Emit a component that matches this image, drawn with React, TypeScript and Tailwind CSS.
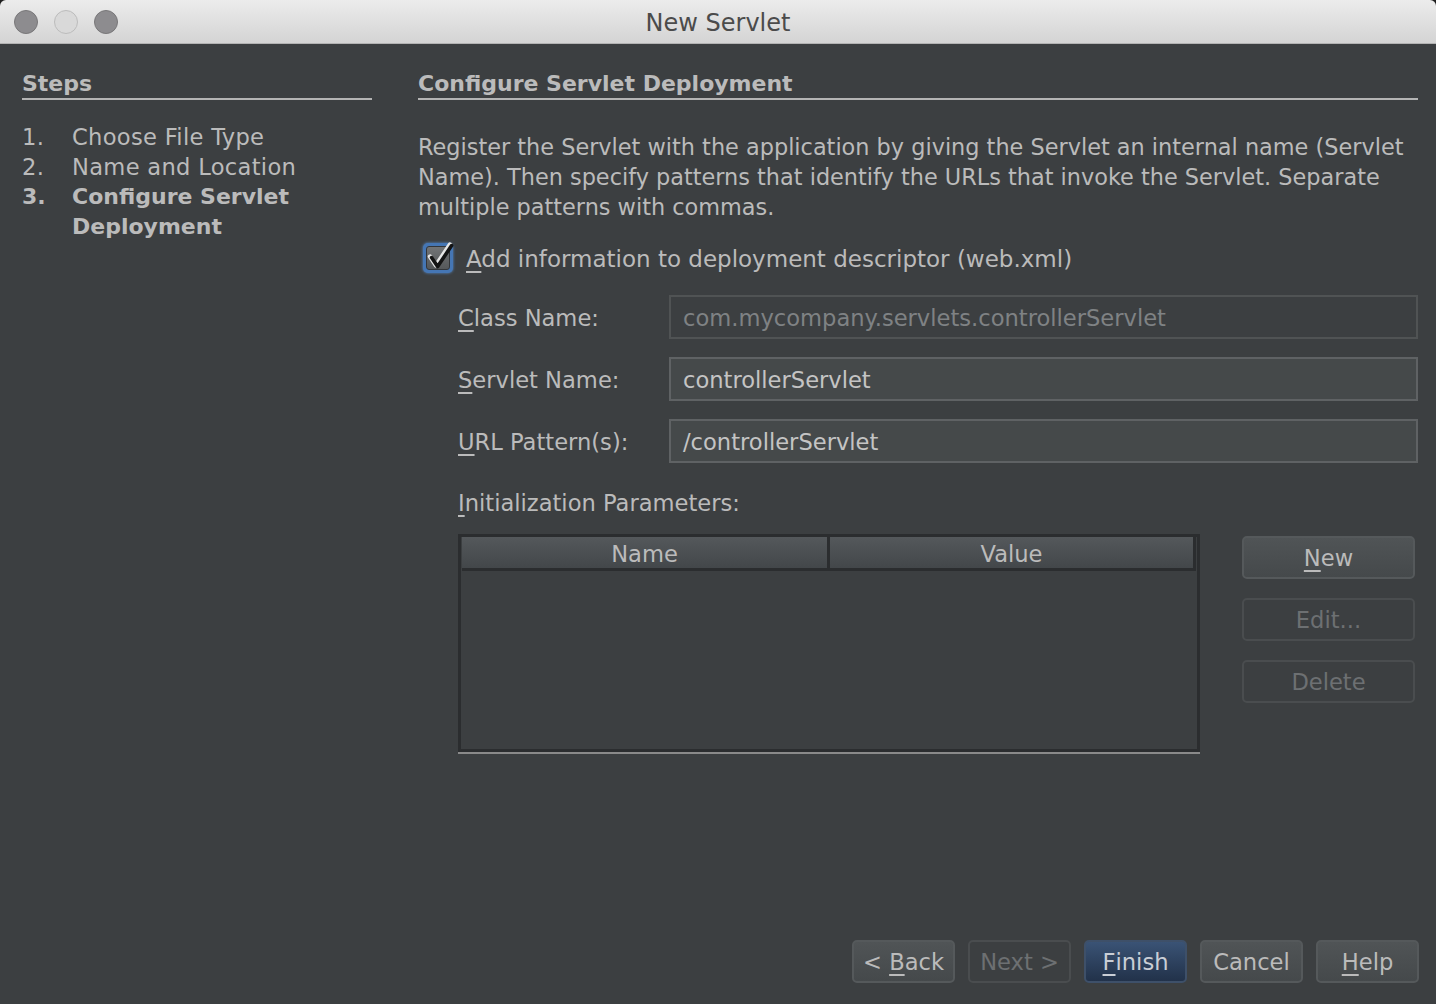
import React from "react";

const U = ({ children }: { children: React.ReactNode }) => (
  <span className="underline underline-offset-[4px] decoration-[1.5px]">{children}</span>
);

function Btn({
  children,
  disabled,
  primary,
  className = "",
}: {
  children: React.ReactNode;
  disabled?: boolean;
  primary?: boolean;
  className?: string;
}) {
  let cls =
    "flex items-center justify-center h-[43px] pt-[1px] rounded-[5px] border-2 text-[22.6px] leading-none ";
  if (primary) {
    cls += "border-[#3e5069] bg-gradient-to-b from-[#3a5375] to-[#22324a] text-[#c9ced6] ";
  } else if (disabled) {
    cls += "border-[#4a4d4f] bg-[#3c3f41] text-[#6d7072] ";
  } else {
    cls += "border-[#55595b] bg-gradient-to-b from-[#505456] to-[#45494b] text-[#bbbbbb] ";
  }
  return <div className={cls + className}>{children}</div>;
}

function Field({
  label,
  value,
  disabled,
}: {
  label: React.ReactNode;
  value: string;
  disabled?: boolean;
}) {
  return (
    <div className="flex items-center h-[44px]">
      <div className="w-[211px] text-[#bbbbbb] pt-[1px]">{label}</div>
      <div
        className={
          "flex-1 h-[44px] flex items-center px-[12px] pt-[1px] border-2 " +
          (disabled
            ? "border-[#505354] bg-[#3c3f41] text-[#7f8284]"
            : "border-[#5f6264] bg-[#45494a] text-[#c4c4c4]")
        }
      >
        {value}
      </div>
    </div>
  );
}

export default function App() {
  return (
    <div
      className="w-[1436px] h-[1004px] bg-[#1e1e1e] overflow-hidden text-[22.6px] leading-[30px]"
      style={{ fontFamily: '"DejaVu Sans", "Noto Sans", sans-serif' }}
    >
      {/* Title bar */}
      <div className="relative h-[44px] rounded-t-[6px] bg-gradient-to-b from-[#ececec] to-[#d4d4d4] border-b border-[#b3b3b3] flex items-center justify-center">
        <div className="absolute left-[14px] top-[10px] flex gap-[16px]">
          <div className="w-[24px] h-[24px] rounded-full bg-[#8d8c8f] border border-[#787779]" />
          <div className="w-[24px] h-[24px] rounded-full bg-[#d9d9d9] border border-[#bcbcbc]" />
          <div className="w-[24px] h-[24px] rounded-full bg-[#8d8c8f] border border-[#787779]" />
        </div>
        <div className="text-[24px] text-[#4b4b4b] pt-[2px]">New Servlet</div>
      </div>

      {/* Body */}
      <div className="h-[960px] bg-[#3c3f41] flex flex-col text-[#bbbbbb]">
        <div className="flex pt-[25px]">
          {/* Left steps */}
          <div className="ml-[22px] w-[350px]">
            <div className="font-bold text-[22px] border-b-2 border-[#b4b4b4] h-[31px]">Steps</div>
            <div className="mt-[22px]">
              <div className="flex tracking-[0.3px]">
                <span className="w-[50px]">1.</span>
                <span>Choose File Type</span>
              </div>
              <div className="flex tracking-[0.3px]">
                <span className="w-[50px]">2.</span>
                <span>Name and Location</span>
              </div>
              <div className="flex font-bold text-[22px]">
                <span className="w-[50px]">3.</span>
                <span>
                  Configure Servlet
                  <br />
                  Deployment
                </span>
              </div>
            </div>
          </div>

          {/* Right content */}
          <div className="ml-[46px] w-[1000px]">
            <div className="font-bold text-[22px] border-b-2 border-[#b4b4b4] h-[31px]">
              Configure Servlet Deployment
            </div>
            <div className="mt-[32px] whitespace-nowrap text-[22.4px]">
              Register the Servlet with the application by giving the Servlet an internal name (Servlet
              <br />
              Name). Then specify patterns that identify the URLs that invoke the Servlet. Separate
              <br />
              multiple patterns with commas.
            </div>

            <div className="mt-[21px] flex items-center h-[30px]">
              <div className="relative ml-[5px] w-[30px] h-[30px] rounded-[5px] bg-[#4576b4] p-[3px] shadow-[0_0_3px_#5a8fd0]">
                <div className="w-full h-full rounded-[3px] bg-gradient-to-b from-[#727476] to-[#55585a] border border-[#33363a]" />
                <svg
                  viewBox="0 0 30 30"
                  className="absolute left-0 top-0 w-[30px] h-[30px] overflow-visible"
                >
                  <path
                    d="M8 14 L14 23 L28 2"
                    fill="none"
                    stroke="#e6e6e6"
                    strokeWidth="4.5"
                    strokeLinecap="round"
                    strokeLinejoin="round"
                    transform="translate(-1 -0.5)"
                  />
                  <path
                    d="M8 14 L14 23 L28 2"
                    fill="none"
                    stroke="#141414"
                    strokeWidth="3.6"
                    strokeLinecap="round"
                    strokeLinejoin="round"
                    transform="translate(0.6 0.6)"
                  />
                </svg>
              </div>
              <div className="ml-[13px] pt-[1px] text-[23px]">
                <U>A</U>dd information to deployment descriptor (web.xml)
              </div>
            </div>

            <div className="ml-[40px] mt-[22px] flex flex-col gap-[18px]">
              <Field
                label={
                  <>
                    <U>C</U>lass Name:
                  </>
                }
                value="com.mycompany.servlets.controllerServlet"
                disabled
              />
              <Field
                label={
                  <>
                    <U>S</U>ervlet Name:
                  </>
                }
                value="controllerServlet"
              />
              <Field
                label={
                  <>
                    <U>U</U>RL Pattern(s):
                  </>
                }
                value="/controllerServlet"
              />
            </div>

            <div className="ml-[40px] mt-[25px]">
              <U>I</U>nitialization Parameters:
            </div>

            <div className="ml-[40px] mt-[16px] flex">
              <div className="w-[742px] h-[220px] border-b-2 border-[#8a8a8a]">
                <div className="h-[218px] border-[3px] border-[#2b2d2f] bg-[#3c3f41] px-[1px]">
                  <div className="flex h-[34px] border-b-[3px] border-[#2b2d2f] bg-gradient-to-b from-[#54585b] to-[#43474a]">
                    <div className="w-[368px] flex items-center justify-center pt-[3px] border-r-[3px] border-[#2b2d2f]">
                      Name
                    </div>
                    <div className="flex-1 flex items-center justify-center pt-[3px] border-r-[3px] border-[#2b2d2f]">
                      Value
                    </div>
                  </div>
                </div>
              </div>
              <div className="ml-[42px] w-[173px] flex flex-col gap-[19px] pt-[2px]">
                <Btn>
                  <U>N</U>ew
                </Btn>
                <Btn disabled>Edit...</Btn>
                <Btn disabled>Delete</Btn>
              </div>
            </div>
          </div>
        </div>

        {/* Bottom buttons */}
        <div className="mt-auto mb-[21px] mr-[17px] flex justify-end gap-[13px]">
          <Btn className="w-[103px]">
            &lt;&nbsp;<U>B</U>ack
          </Btn>
          <Btn disabled className="w-[103px]">
            Next &gt;
          </Btn>
          <Btn primary className="w-[103px]">
            <U>F</U>inish
          </Btn>
          <Btn className="w-[103px]">Cancel</Btn>
          <Btn className="w-[103px]">
            <U>H</U>elp
          </Btn>
        </div>
      </div>
    </div>
  );
}
